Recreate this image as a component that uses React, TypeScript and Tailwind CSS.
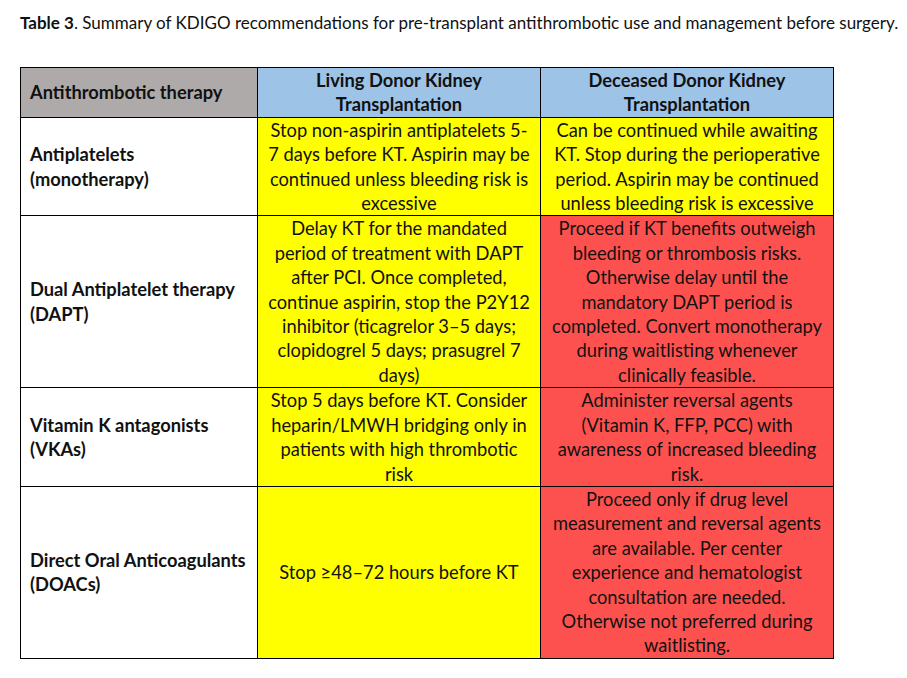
import React from "react";

type Row = {
  label: string[];
  living: string[];
  deceased: string[];
  livingBg: string;
  deceasedBg: string;
};

const rows: Row[] = [
  {
    label: ["Antiplatelets", "(monotherapy)"],
    living: [
      "Stop non-aspirin antiplatelets 5-",
      "7 days before KT. Aspirin may be",
      "continued unless bleeding risk is",
      "excessive",
    ],
    deceased: [
      "Can be continued while awaiting",
      "KT. Stop during the perioperative",
      "period. Aspirin may be continued",
      "unless bleeding risk is excessive",
    ],
    livingBg: "bg-[#ffff00]",
    deceasedBg: "bg-[#ffff00]",
  },
  {
    label: ["Dual Antiplatelet therapy", "(DAPT)"],
    living: [
      "Delay KT for the mandated",
      "period of treatment with DAPT",
      "after PCI. Once completed,",
      "continue aspirin, stop the P2Y12",
      "inhibitor (ticagrelor 3\u20135 days;",
      "clopidogrel 5 days; prasugrel 7",
      "days)",
    ],
    deceased: [
      "Proceed if KT benefits outweigh",
      "bleeding or thrombosis risks.",
      "Otherwise delay until the",
      "mandatory DAPT period is",
      "completed. Convert monotherapy",
      "during waitlisting whenever",
      "clinically feasible.",
    ],
    livingBg: "bg-[#ffff00]",
    deceasedBg: "bg-[#fd5150]",
  },
  {
    label: ["Vitamin K antagonists", "(VKAs)"],
    living: [
      "Stop 5 days before KT. Consider",
      "heparin/LMWH bridging only in",
      "patients with high thrombotic",
      "risk",
    ],
    deceased: [
      "Administer reversal agents",
      "(Vitamin K, FFP, PCC) with",
      "awareness of increased bleeding",
      "risk.",
    ],
    livingBg: "bg-[#ffff00]",
    deceasedBg: "bg-[#fd5150]",
  },
  {
    label: ["Direct Oral Anticoagulants", "(DOACs)"],
    living: ["Stop \u226548\u201372 hours before KT"],
    deceased: [
      "Proceed only if drug level",
      "measurement and reversal agents",
      "are available. Per center",
      "experience and hematologist",
      "consultation are needed.",
      "Otherwise not preferred during",
      "waitlisting.",
    ],
    livingBg: "bg-[#ffff00]",
    deceasedBg: "bg-[#fd5150]",
  },
];

function Lines({ lines }: { lines: string[] }) {
  return (
    <>
      {lines.map((l, i) => (
        <div key={i} className="whitespace-nowrap">
          {l}
        </div>
      ))}
    </>
  );
}

export default function App() {
  return (
    <div
      className="min-h-[678px] w-[907px] bg-white text-[#111111]"
      style={{ fontFamily: "Lato, 'Open Sans', sans-serif" }}
    >
      <div className="pt-[13px] pl-[20px] text-[17px] leading-[20px] whitespace-nowrap">
        <span className="font-bold">Table 3</span>. Summary of KDIGO recommendations for pre-transplant antithrombotic use and management before surgery.
      </div>
      <table className="mt-[34px] ml-[20px] border-collapse table-fixed w-[813px] text-[18.3px] leading-[24.4px]">
        <colgroup>
          <col className="w-[237px]" />
          <col className="w-[283px]" />
          <col className="w-[293px]" />
        </colgroup>
        <thead>
          <tr>
            <th className="border border-black bg-[#aeaaaa] px-[9px] py-0 text-left align-middle font-bold">
              Antithrombotic therapy
            </th>
            <th className="border border-black bg-[#9dc3e6] px-1 py-0 text-center align-middle font-bold">
              <Lines lines={["Living Donor Kidney", "Transplantation"]} />
            </th>
            <th className="border border-black bg-[#9dc3e6] px-1 py-0 text-center align-middle font-bold">
              <Lines lines={["Deceased Donor Kidney", "Transplantation"]} />
            </th>
          </tr>
        </thead>
        <tbody>
          {rows.map((r, i) => (
            <tr key={i}>
              <td className="border border-black bg-white px-[9px] py-0 align-middle font-bold">
                <Lines lines={r.label} />
              </td>
              <td className={`border border-black ${r.livingBg} px-1 py-0 text-center align-middle`}>
                <Lines lines={r.living} />
              </td>
              <td className={`border border-black ${r.deceasedBg} px-1 py-0 text-center align-middle`}>
                <Lines lines={r.deceased} />
              </td>
            </tr>
          ))}
        </tbody>
      </table>
    </div>
  );
}
